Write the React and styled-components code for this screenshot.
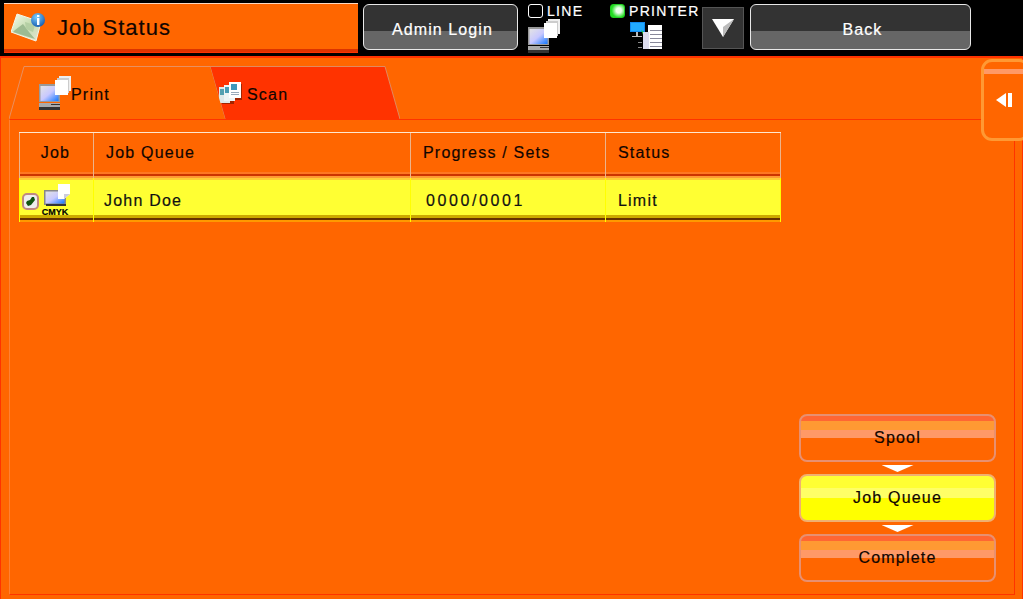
import React from 'react';
import styled, { createGlobalStyle } from 'styled-components';

const GlobalStyle = createGlobalStyle`
  html, body {
    margin: 0;
    padding: 0;
    background: #000;
  }
  body {
    font-family: "Liberation Sans", Arial, sans-serif;
    -webkit-text-stroke: 0.2px currentColor;
  }
`;

const jobs = [{ name: 'John Doe', progress: '0000/0001', status: 'Limit' }];

const ScreenGradient = () => (
  <defs>
    <linearGradient id="screen" x1="0" y1="0" x2="1" y2="1">
      <stop offset="0" stopColor="#e4e4e4" />
      <stop offset="0.5" stopColor="#c8c8ff" />
      <stop offset="1" stopColor="#1177ff" />
    </linearGradient>
  </defs>
);

const MonitorIcon = () => (
  <svg width="32" height="34" viewBox="0 0 32 34">
    <ScreenGradient />
    <rect x="0" y="8" width="21" height="18" fill="#999" />
    <rect x="1.5" y="10" width="18" height="15" fill="url(#screen)" />
    <rect x="0" y="27" width="21" height="4" fill="#aaa" />
    <rect x="0" y="31" width="21" height="3" fill="#333" />
    <rect x="12" y="28" width="9" height="1" fill="#333" />
    <rect x="20" y="0" width="12" height="15" fill="#eee" />
    <rect x="18" y="2" width="12" height="15" fill="#ccc" />
    <rect x="16" y="4" width="13" height="15" fill="#fff" />
  </svg>
);

const ColorJobIcon = () => (
  <svg width="27" height="22" viewBox="0 0 27 22">
    <ScreenGradient />
    <rect x="0" y="6" width="22" height="15" fill="#888" />
    <rect x="1.5" y="7.5" width="19" height="12" fill="url(#screen)" />
    <rect x="2" y="20" width="20" height="2" fill="#333" />
    <polygon points="14,0 26,0 26,10 20,15 14,15" fill="#fff" />
    <polygon points="26,10 20,15 20,10" fill="#ccd" />
  </svg>
);

const ScanIcon = () => (
  <svg width="25" height="25" viewBox="0 0 25 25">
    <rect x="4" y="7" width="12" height="16" fill="#a32400" />
    <rect x="12" y="3" width="12" height="16" fill="#a32400" />
    <rect x="1" y="6" width="11" height="16" fill="#dfe8e8" />
    <rect x="2" y="8" width="6" height="6" fill="#55a0b0" />
    <rect x="6" y="4" width="11" height="16" fill="#eef4f4" />
    <rect x="7" y="6" width="6" height="6" fill="#4a9cb4" />
    <rect x="11" y="1" width="12" height="16" fill="#fff" />
    <rect x="13" y="3" width="6" height="6" fill="#3f98bc" />
    <rect x="13" y="11" width="8" height="1" fill="#9ab" />
    <rect x="13" y="13" width="8" height="1" fill="#9ab" />
  </svg>
);

const JobStatusIcon = () => (
  <svg width="34" height="32" viewBox="0 0 34 32">
    <defs>
      <linearGradient id="map" x1="0" y1="0" x2="1" y2="1">
        <stop offset="0" stopColor="#fbfdf0" />
        <stop offset="0.5" stopColor="#c4dcb0" />
        <stop offset="1" stopColor="#e6e6d4" />
      </linearGradient>
      <radialGradient id="info" cx="0.4" cy="0.3" r="0.8">
        <stop offset="0" stopColor="#7ccfff" />
        <stop offset="1" stopColor="#0a4fa8" />
      </radialGradient>
    </defs>
    <polygon points="6,2 30,10 25,29 0,20" fill="url(#map)" stroke="#f4f4e8" strokeWidth="1" />
    <polygon points="4,18 12,12 18,20 24,27 2,20" fill="#9dbb92" />
    <polygon points="14,10 24,13 22,20 15,17" fill="#b4cfa4" />
    <circle cx="27" cy="8" r="7" fill="url(#info)" />
    <rect x="26" y="6" width="2.4" height="7" fill="#fff" />
    <rect x="26" y="3" width="2.4" height="2" fill="#fff" />
  </svg>
);

const PrinterIcon = () => (
  <svg width="34" height="28" viewBox="0 0 34 28">
    <rect x="0" y="0" width="15" height="10" fill="#1188ee" />
    <rect x="1" y="1" width="13" height="8" fill="#22aaff" />
    <rect x="6" y="10" width="2" height="4" fill="#bbb" />
    <rect x="2" y="14" width="10" height="1" fill="#bbb" />
    <polygon points="11,8 17,12 14,15" fill="#22cc44" />
    <rect x="18" y="3" width="14" height="24" fill="#fff" />
    <rect x="13" y="10" width="6" height="17" fill="#dde" />
    <rect x="20" y="8" width="12" height="1" fill="#889" />
    <rect x="20" y="12" width="12" height="1" fill="#889" />
    <rect x="20" y="16" width="12" height="1" fill="#889" />
    <rect x="20" y="20" width="12" height="1" fill="#889" />
    <rect x="20" y="24" width="12" height="1" fill="#889" />
    <rect x="8" y="20" width="4" height="1" fill="#888" />
    <rect x="8" y="25" width="4" height="1" fill="#888" />
  </svg>
);

const CheckIcon = () => (
  <svg width="17" height="17" viewBox="0 0 17 17">
    <rect x="1" y="1" width="15" height="15" rx="4" fill="#eee" stroke="#c08a80" strokeWidth="2" />
    <path d="M4 10 L6 13 L9 12 L13 7 L12 4 L10 4 L8 7 L5 8 Z" fill="#115511" />
  </svg>
);

const Page = () => (
  <Screen>
    <TopBar>
      <TitleBar>
        <JobStatusIcon />
        <TitleText>Job Status</TitleText>
      </TitleBar>
      <TopButton $width={155}>Admin Login</TopButton>
      <Indicator $width={82} $first>
        <IndicatorLabel>
          <Lamp />
          LINE
        </IndicatorLabel>
        <IconSlot>
          <MonitorIcon />
        </IconSlot>
      </Indicator>
      <Indicator $width={92}>
        <IndicatorLabel>
          <Lamp $on />
          PRINTER
        </IndicatorLabel>
        <PrinterSlot>
          <PrinterIcon />
        </PrinterSlot>
      </Indicator>
      <ArrowButton>
        <svg width="22" height="18" viewBox="0 0 22 18">
          <polygon points="0,0 22,0 11,18" fill="#fff" />
          <polygon points="22,0 11,18 11,8" fill="#bbb" />
        </svg>
      </ArrowButton>
      <TopButton $width={221}>Back</TopButton>
    </TopBar>

    <Main>
      <TabRow>
        <Tab $active>
          <TabShape viewBox="0 0 216 53" preserveAspectRatio="none">
            <polygon points="15,0.5 201,0.5 216,53 0,53" fill="#ff6600" />
            <path d="M0 53 L15 0.5 L201 0.5" fill="none" stroke="#e89060" strokeWidth="1" />
          </TabShape>
          <TabContent>
            <MonitorIcon />
            <TabLabel>Print</TabLabel>
          </TabContent>
        </Tab>
        <Tab>
          <TabShape viewBox="0 0 190 53" preserveAspectRatio="none">
            <polygon points="0,0.5 175,0.5 190,53 15,53" fill="#ff3300" />
            <path d="M15 53 L0 0.5 L175 0.5 L190 53" fill="none" stroke="#e08a60" strokeWidth="1" />
          </TabShape>
          <TabContent $scan>
            <ScanIcon />
            <TabLabel>Scan</TabLabel>
          </TabContent>
        </Tab>
      </TabRow>

      <Panel>
        <JobTable>
          <HeadRow>
            <HeadCell $center>Job</HeadCell>
            <HeadCell>Job Queue</HeadCell>
            <HeadCell>Progress / Sets</HeadCell>
            <HeadCell>Status</HeadCell>
          </HeadRow>
          {jobs.map((job) => (
            <JobRow key={job.name}>
              <JobCell $icons>
                <CheckIcon />
                <JobType>
                  <ColorJobIcon />
                  <Cmyk>CMYK</Cmyk>
                </JobType>
              </JobCell>
              <JobCell>{job.name}</JobCell>
              <JobCell $wide>{job.progress}</JobCell>
              <JobCell>{job.status}</JobCell>
            </JobRow>
          ))}
        </JobTable>

        <Steps>
          <StepButton>Spool</StepButton>
          <StepArrow />
          <StepButton $active>Job Queue</StepButton>
          <StepArrow />
          <StepButton>Complete</StepButton>
        </Steps>
      </Panel>

      <SideHandle>
        <svg width="17" height="14" viewBox="0 0 17 14">
          <polygon points="0,7 10,0 10,14" fill="#fff" />
          <rect x="12" y="0" width="4" height="14" fill="#fff" />
        </svg>
      </SideHandle>
    </Main>
  </Screen>
);

const Screen = styled.div`
  width: 1023px;
  height: 599px;
  display: flex;
  flex-direction: column;
  overflow: hidden;
  background: #000;
`;

const TopBar = styled.div`
  height: 56px;
  flex: none;
  display: flex;
  align-items: flex-start;
  padding: 3px 0 0 4px;
  box-sizing: border-box;
  background: #000;
`;

const TitleBar = styled.div`
  width: 354px;
  height: 50px;
  box-sizing: border-box;
  display: flex;
  align-items: center;
  gap: 12px;
  padding: 0 0 0 7px;
  margin-right: 5px;
  background: linear-gradient(#ffd8c0 0 1px, #ff6600 1px 46px, #dd3300 46px 49px, #ff3300 49px);
`;

const TitleText = styled.span`
  font-size: 22px;
  letter-spacing: 1px;
  color: #110500;
`;

const TopButton = styled.div`
  width: ${(p) => p.$width}px;
  height: 46px;
  margin-top: 1px;
  flex: none;
  box-sizing: border-box;
  display: flex;
  align-items: center;
  justify-content: center;
  border: 1.5px solid #e8e8e8;
  border-radius: 6px;
  background: linear-gradient(#333 0 58%, #666 58%);
  color: #fff;
  font-size: 16px;
  letter-spacing: 1.1px;
  padding: 5px 0 0 4px;
`;

const Indicator = styled.div`
  width: ${(p) => p.$width}px;
  margin-left: ${(p) => (p.$first ? 10 : 0)}px;
  flex: none;
  display: flex;
  flex-direction: column;
`;

const IndicatorLabel = styled.div`
  display: flex;
  align-items: center;
  gap: 4px;
  height: 15px;
  color: #fff;
  font-size: 14px;
  letter-spacing: 1.3px;
`;

const Lamp = styled.span`
  width: 15px;
  height: 14px;
  box-sizing: border-box;
  border-radius: 3px;
  border: 1px solid ${(p) => (p.$on ? '#22cc22' : '#fff')};
  background: ${(p) =>
    p.$on ? 'radial-gradient(circle at 60% 45%, #eaffea 0 25%, #22dd22 70%)' : '#000'};
`;

const IconSlot = styled.div`
  height: 32px;
  margin-top: 1px;
`;

const PrinterSlot = styled.div`
  margin: 4px 0 0 20px;
`;

const ArrowButton = styled.div`
  width: 42px;
  height: 42px;
  margin: 4px 6px 0 0;
  flex: none;
  box-sizing: border-box;
  display: flex;
  align-items: center;
  justify-content: center;
  background: #333;
  border: 1px solid #555;
`;

const Main = styled.div`
  flex: 1;
  position: relative;
  box-sizing: border-box;
  display: flex;
  flex-direction: column;
  padding: 8px 8px 4px 8px;
  background: #ff6600;
  border: 1px solid #ff3300;
  border-top-width: 2px;
  border-bottom: none;
`;

const TabRow = styled.div`
  height: 53px;
  flex: none;
  display: flex;
`;

const Tab = styled.div`
  position: relative;
  width: ${(p) => (p.$active ? 216 : 190)}px;
  margin-left: ${(p) => (p.$active ? 0 : -15)}px;
  z-index: ${(p) => (p.$active ? 1 : 0)};
`;

const TabShape = styled.svg`
  position: absolute;
  inset: 0;
  width: 100%;
  height: 100%;
`;

const TabContent = styled.div`
  position: relative;
  height: 100%;
  display: flex;
  align-items: center;
  padding: ${(p) => (p.$scan ? '1px' : '0')} 0 0 ${(p) => (p.$scan ? 8 : 30)}px;
  box-sizing: border-box;
  gap: ${(p) => (p.$scan ? 4 : 0)}px;
`;

const TabLabel = styled.span`
  font-size: 16px;
  letter-spacing: 1.2px;
  color: #110500;
  margin-top: 4px;
`;

const Panel = styled.div`
  flex: 1;
  display: flex;
  flex-direction: column;
  justify-content: space-between;
  padding: 12px 18px 12px 9px;
  border: 1px solid #ff3300;
  border-left-color: #ff8033;
  width: 1006px;
  box-sizing: border-box;
`;

const JobTable = styled.div`
  width: 762px;
  display: flex;
  flex-direction: column;
`;

const tableColumns = '74px 317px 195px 176px';

const HeadRow = styled.div`
  display: grid;
  grid-template-columns: ${tableColumns};
  height: 46px;
  border-top: 1px solid #ffe8d0;
  box-sizing: border-box;
  background: linear-gradient(#ff6600 0 39px, #ff7722 39px 41px, #cc3300 41px 43px, #ff9933 43px);
`;

const HeadCell = styled.div`
  display: flex;
  align-items: center;
  justify-content: ${(p) => (p.$center ? 'center' : 'flex-start')};
  padding: 0 2px 5px ${(p) => (p.$center ? 0 : 12)}px;
  border-left: 1px solid #ecb48c;
  font-size: 16px;
  letter-spacing: 1.2px;
  color: #110500;
  &:last-child {
    border-right: 1px solid #ecb48c;
  }
`;

const JobRow = styled.div`
  display: grid;
  grid-template-columns: ${tableColumns};
  height: 44px;
  background: linear-gradient(#ffcc33 0 2px, #ffff33 2px 37px, #ccaa00 37px 40px, #663300 40px 42px, #ff9900 42px);
`;

const JobCell = styled.div`
  display: flex;
  align-items: center;
  gap: ${(p) => (p.$icons ? 3 : 0)}px;
  padding: 2px 0 0 ${(p) => (p.$icons ? 2 : p.$wide ? 15 : 10)}px;
  border-left: 1px solid #ffff00;
  font-size: 16px;
  letter-spacing: ${(p) => (p.$wide ? 2.6 : 1.2)}px;
  color: #111;
  &:last-child {
    padding-left: 12px;
    border-right: 1px solid #ffff00;
  }
`;

const JobType = styled.div`
  width: 30px;
  height: 34px;
  display: flex;
  flex-direction: column;
  align-items: center;
`;

const Cmyk = styled.span`
  font-size: 9px;
  font-weight: bold;
  line-height: 10px;
  letter-spacing: 0;
  color: #000;
  margin: 1px 0 0 -4px;
`;

const Steps = styled.div`
  align-self: flex-end;
  width: 197px;
  display: flex;
  flex-direction: column;
  align-items: center;
`;

const StepButton = styled.div`
  width: 100%;
  height: 48px;
  box-sizing: border-box;
  display: flex;
  align-items: center;
  justify-content: center;
  border: 2px solid ${(p) => (p.$active ? '#f0b070' : '#e89070')};
  border-radius: 8px;
  font-size: 16px;
  letter-spacing: 1.2px;
  color: #110500;
  background: ${(p) =>
    p.$active
      ? 'linear-gradient(#ffff33 0 12px, #ffff66 12px 22px, #ffff00 22px)'
      : 'linear-gradient(#ff6633 0 5px, #ff9933 5px 14px, #ff9966 14px 22px, #ff6600 22px)'};
`;

const StepArrow = styled.div`
  width: 32px;
  height: 7px;
  margin: 3px 0 2px;
  background: #fff;
  clip-path: polygon(0 0, 100% 0, 50% 100%);
`;

const SideHandle = styled.div`
  position: absolute;
  top: 1px;
  right: -8px;
  width: 49px;
  height: 82px;
  box-sizing: border-box;
  display: flex;
  align-items: center;
  padding: 0 0 0 12px;
  border: 3px solid #ff9933;
  border-radius: 11px;
  background: linear-gradient(#ff6600 0 7px, #ff9966 7px 12px, #ff6600 12px);
`;

const App = () => (
  <>
    <GlobalStyle />
    <Page />
  </>
);

export default App;
